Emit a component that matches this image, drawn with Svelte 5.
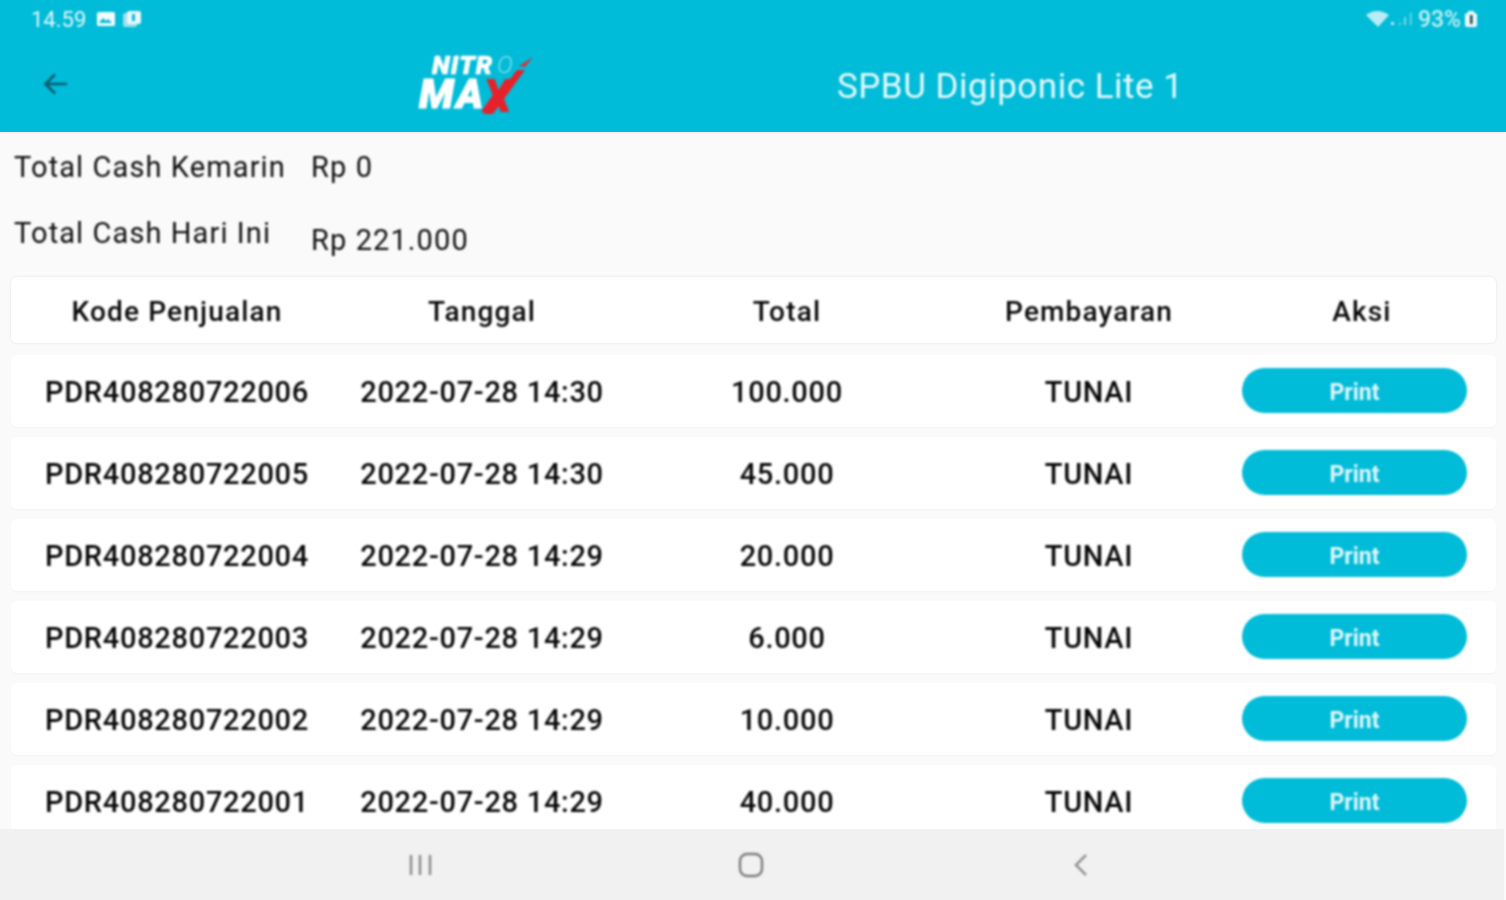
<script>
  const rows = [
    ['PDR408280722006', '2022-07-28 14:30', '100.000'],
    ['PDR408280722005', '2022-07-28 14:30', '45.000'],
    ['PDR408280722004', '2022-07-28 14:29', '20.000'],
    ['PDR408280722003', '2022-07-28 14:29', '6.000'],
    ['PDR408280722002', '2022-07-28 14:29', '10.000'],
    ['PDR408280722001', '2022-07-28 14:29', '40.000']
  ];
</script>

<div class="screen">
  <header class="appbar">
    <div class="status soft">
      <div class="status-left">
        <span class="clock">14.59</span>
        <svg width="20" height="16" viewBox="0 0 20 16"><rect x="1" y="1" width="18" height="14" rx="1.5" fill="#f2fbfd"/><path d="M3 12l4-5 3 3 2-2 4 4z" fill="#00bcd8"/></svg>
        <svg width="20" height="18" viewBox="0 0 20 18"><rect x="1" y="3" width="14" height="14" rx="2" fill="#9fdfec"/><rect x="5" y="1" width="14" height="13" rx="2" fill="#e8f8fb"/><rect x="10" y="4" width="3" height="7" fill="#00bcd8"/></svg>
      </div>
      <div class="status-right">
        <svg width="50" height="18" viewBox="0 0 50 18"><path d="M0 5q11-8 23 0l-11 12z" fill="#b9ecf4"/><rect x="25" y="12" width="3" height="3" fill="#b9ecf4"/><path d="M32 15l3-3v3zM38 15v-7l2-2v9zM44 15V3l1.500-1v13z" fill="#7fd7e6"/></svg>
        <span class="pct">93%</span>
        <svg width="14" height="18" viewBox="0 0 14 18"><rect x="1" y="3" width="12" height="14" rx="2" fill="#eefafc"/><rect x="4" y="1" width="6" height="3" fill="#eefafc"/><rect x="6" y="5" width="2.500" height="9" fill="#17414b"/></svg>
      </div>
    </div>
    <div class="toolbar soft">
      <svg class="back" width="28" height="28" viewBox="0 0 28 28" fill="none" stroke="#0a5c70" stroke-width="2.600"><path d="M25 14H4M13 4.500L3.500 14l9.500 9.500"/></svg>
      <div class="logo">
        <span class="nitro">NITR</span>
        <span class="oh">O</span>
        <span class="max">MA</span>
        <span class="x">X</span>
        <svg class="slash" width="52" height="60" viewBox="0 0 52 60"><path d="M0 58h10L42 14h-8z" fill="#e8202a"/><path d="M36 10L50 1l-8 10z" fill="#d8323a"/></svg>
      </div>
      <h1 class="title">SPBU Digiponic Lite 1</h1>
    </div>
  </header>

  <main class="content">
    <section class="summary soft">
      <div class="sum-row first"><span class="label">Total Cash Kemarin</span><span class="value">Rp 0</span></div>
      <div class="sum-row second"><span class="label">Total Cash Hari Ini</span><span class="value low">Rp 221.000</span></div>
    </section>

    <div class="thead grid">
      <span class="soft">Kode Penjualan</span><span class="soft">Tanggal</span><span class="soft">Total</span><span class="soft">Pembayaran</span><span class="soft aksi">Aksi</span>
    </div>

    <div class="tbody">
      {#each rows as r}
        <div class="trow grid">
          <span class="soft">{r[0]}</span><span class="soft">{r[1]}</span><span class="soft">{r[2]}</span><span class="soft">TUNAI</span>
          <span class="action soft"><button class="print">Print</button></span>
        </div>
      {/each}
    </div>
  </main>

  <nav class="navbar">
    <svg class="soft" width="24" height="24" viewBox="0 0 24 24" stroke="#8a8a8a" stroke-width="2.400"><path d="M2 2v20M11 2v20M21 2v20"/></svg>
    <svg class="soft" width="26" height="26" viewBox="0 0 26 26" fill="none" stroke="#7d7d7d" stroke-width="2.400"><rect x="2" y="2" width="22" height="22" rx="7"/></svg>
    <svg class="soft" width="18" height="24" viewBox="0 0 18 24" fill="none" stroke="#8a8a8a" stroke-width="2.400"><path d="M14 2L4 12l10 10"/></svg>
  </nav>
</div>

<style>
  :global(body) { margin: 0; background: #fafafa; }
  .screen {
    width: 1506px; height: 900px; display: flex; flex-direction: column; overflow: hidden;
    font-family: Roboto, "Liberation Sans", sans-serif; color: #1c1c1c; background: #fafafa;
  }
  .soft { filter: blur(0.8px); }
  .appbar { height: 132px; background: #00bcd8; flex: none; display: flex; flex-direction: column; box-shadow: 0 1px 2px rgba(0,0,0,.08); }
  .status { height: 38px; display: flex; justify-content: space-between; align-items: center; padding: 0 28px 0 31px; color: #e4f7fa; }
  .status-left, .status-right { display: flex; align-items: center; gap: 6px; }
  .status-right { gap: 3px; }
  .clock { font-size: 22px; margin-right: 4px; }
  .pct { font-size: 23px; color: #c5eff5; margin-left: -1px; font-weight: 500; }
  .toolbar { flex: 1; display: flex; align-items: center; padding: 0 0 0 42px; }
  .back { flex: none; margin-top: -2px; }
  .logo { width: 120px; height: 64px; margin-left: 349px; flex: none; position: relative; color: #fff; font-style: italic; font-weight: 900; }
  .nitro { position: absolute; left: 13px; top: 2px; height: 20px; font-size: 26px; line-height: 20px; letter-spacing: 1px; -webkit-text-stroke: 0.6px #fff; }
  .oh { position: absolute; left: 78px; top: 2px; height: 20px; font-size: 24px; line-height: 20px; font-weight: 300; color: #8fdeec; }
  .max { position: absolute; left: 0; top: 26px; height: 30px; font-size: 41px; line-height: 30px; letter-spacing: 2px; -webkit-text-stroke: 1px #fff; }
  .x { position: absolute; left: 64px; top: 26px; height: 34px; font-size: 46px; line-height: 34px; color: #e8202a; }
  .slash { position: absolute; left: 64px; top: 3px; }
  .title { flex: none; margin: 2px 0 0 298px; font-size: 35px; font-weight: 400; letter-spacing: 0.5px; color: #e6f8fb; white-space: nowrap; }
  .content { flex: 1; min-height: 0; overflow: hidden; display: flex; flex-direction: column; }
  .summary { flex: none; height: 145px; padding-left: 14px; font-size: 29px; letter-spacing: 1.1px; color: #0f0f0f; }
  .sum-row { display: flex; align-items: center; }
  .sum-row.first { height: 70px; }
  .sum-row.second { height: 62px; }
  .label { width: 297px; flex: none; }
  .low { margin-top: 13px; }
  .grid { display: grid; grid-template-columns: 332px 278px 332px 272px 271px; align-items: center; text-align: center; }
  .thead { flex: none; margin-left: 11px; width: 1485px; height: 66px; padding-top: 3px; background: #fff; border-radius: 6px; font-size: 28px; font-weight: 500; letter-spacing: 1.15px; color: #0a0a0a; box-shadow: 0 0 3px rgba(0,0,0,.1); box-sizing: border-box; }
  .aksi { padding-left: 3px; }
  .tbody { display: flex; flex-direction: column; gap: 10px; margin: 12px 0 0 11px; width: 1485px; }
  .trow { flex: none; height: 72px; padding-top: 2px; box-sizing: border-box; background: #fff; border-radius: 6px; font-size: 29px; font-weight: 500; letter-spacing: 0.7px; color: #080808; box-shadow: 0 1px 2px rgba(0,0,0,.03); }
  .action { display: flex; padding-left: 17px; margin-top: -2px; }
  .print { width: 225px; height: 45px; margin-top: -1px; border: 0; border-radius: 23px; background: #00bcd8; color: #dff6fa; font: 700 23px Roboto, sans-serif; padding: 3px 0 0; }
  .navbar { flex: none; height: 71px; background: #f1f1f1; display: grid; grid-template-columns: 330px 330px 330px; transform: translateX(-2px); justify-content: center; justify-items: center; align-items: center; }
</style>
